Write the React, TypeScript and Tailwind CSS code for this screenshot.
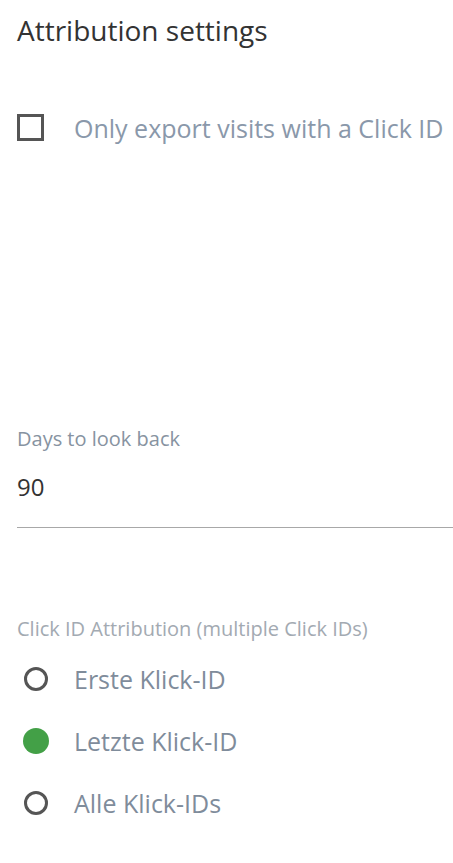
import React from "react";

export default function App() {
  const font = { fontFamily: '"Open Sans", "Liberation Sans", sans-serif' };
  return (
    <div className="w-[453px] h-[863px] bg-white overflow-hidden" style={font}>
      <div className="pl-[17px] pt-[12px]">
        <h1 className="text-[28px] leading-[36px] text-[#333333] font-normal">Attribution settings</h1>
        <label className="mt-[65px] flex items-start">
          <span className="mt-[1px] w-[27px] h-[27px] border-[3px] border-[#555555] box-border shrink-0"></span>
          <span className="ml-[30px] text-[25px] leading-[30px] text-[#8a98aa] whitespace-nowrap">Only export visits with a Click ID</span>
        </label>
        <div className="mt-[282px] text-[20px] leading-[28px] text-[#8793a1]">Days to look back</div>
        <div className="mt-[18px] border-b border-[#a8a8a8] pb-[24px]">
          <div className="text-[24px] leading-[32px] text-[#333333]">90</div>
        </div>
        <div className="mt-[87px] text-[20px] leading-[28px] text-[#a3aab2] whitespace-nowrap">Click ID Attribution (multiple Click IDs)</div>
        <div className="mt-[21px] flex flex-col gap-[32px]">
          {[
            { t: "Erste Klick-ID", on: false },
            { t: "Letzte Klick-ID", on: true },
            { t: "Alle Klick-IDs", on: false },
          ].map((o) => (
            <div key={o.t} className="flex items-center h-[30px]">
              <span className="w-[38px] flex justify-center shrink-0">
                {o.on ? (
                  <span className="w-[26px] h-[26px] rounded-full bg-[#43a047]"></span>
                ) : (
                  <span className="w-[24px] h-[24px] rounded-full border-[3px] border-[#555555] box-border"></span>
                )}
              </span>
              <span className="ml-[19px] text-[25px] leading-[30px] text-[#7f8c9b] whitespace-nowrap">{o.t}</span>
            </div>
          ))}
        </div>
      </div>
    </div>
  );
}
